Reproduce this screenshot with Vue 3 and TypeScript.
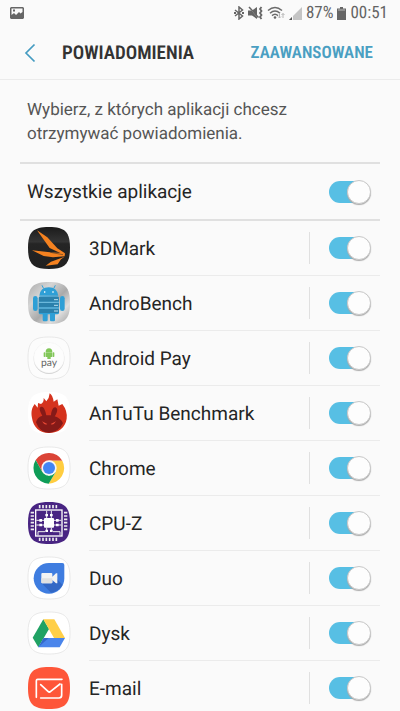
<script setup lang="ts">
import { computed, ref } from 'vue'

interface AppEntry {
  id: string
  name: string
  enabled: boolean
}

const apps = ref<AppEntry[]>([
  { id: 'mark', name: '3DMark', enabled: true },
  { id: 'androbench', name: 'AndroBench', enabled: true },
  { id: 'pay', name: 'Android Pay', enabled: true },
  { id: 'antutu', name: 'AnTuTu Benchmark', enabled: true },
  { id: 'chrome', name: 'Chrome', enabled: true },
  { id: 'cpuz', name: 'CPU-Z', enabled: true },
  { id: 'duo', name: 'Duo', enabled: true },
  { id: 'drive', name: 'Dysk', enabled: true },
  { id: 'email', name: 'E-mail', enabled: true },
])

const allEnabled = computed<boolean>({
  get: () => apps.value.every((app) => app.enabled),
  set: (value) => apps.value.forEach((app) => (app.enabled = value)),
})

const squircle = 'M39 81C39 33 54 18 102 18S165 33 165 81S150 144 102 144S39 129 39 81Z'
const pinsAcross = [74, 84, 94, 104, 114, 124]
const pinsDown = [50, 60, 70, 80, 90, 100]
</script>

<template>
  <div class="screen">
    <div class="status">
      <svg class="picture" viewBox="0 0 14 12" aria-hidden="true">
        <path fill="#666" fill-rule="evenodd" d="M1 0H13L14 1V11L13 12H1L0 11V1ZM1.500 1.500V8L4 6L6 8L9 5L10.500 6.500L12.500 5V1.500ZM3 2.500H5V4.500H3Z" />
      </svg>
      <div class="indicators">
        <svg class="bluetooth" viewBox="0 0 10 14" aria-hidden="true">
          <path d="M1 4L8.500 10L5 13V1L8.500 4L1 10" fill="none" stroke="#666" stroke-width="1.500" />
          <path d="M0 6h2v2H0zM8 6h2v2H8z" fill="#666" />
        </svg>
        <svg class="mute" viewBox="0 0 15 14" aria-hidden="true">
          <path d="M0 4.500H4L9 1V13L4 9.500H0Z" fill="#666" />
          <path d="M0 .5L11 12.500" stroke="#fafafa" stroke-width="1" />
          <path d="M1 1L10.500 11.500" stroke="#666" stroke-width="1.500" />
          <path d="M13.500 1L12 3L13.500 5L12 7L13.500 9L12 11L13.500 13" fill="none" stroke="#666" stroke-width="1.800" />
        </svg>
        <svg class="wifi" viewBox="0 0 18 14" aria-hidden="true">
          <path d="M1 4.500Q8 -1.500 15 4.500M3 7.200Q8 2.700 13 7.200M5 9.600Q8 7 11 9.600" fill="none" stroke="#6b6b6b" stroke-width="1.500" />
          <circle cx="8" cy="11.500" r="1.300" fill="#666" />
          <path d="M12.500 7.500V12M11 10.500L12.500 12L14 10.500M16 12V7.500M14.500 9L16 7.500L17.500 9" fill="none" stroke="#b5b5b5" />
        </svg>
        <svg class="signal" viewBox="0 0 13 13" aria-hidden="true">
          <path d="M0 13L13 0V13Z" fill="#c4c4c4" />
          <path d="M0 13L3 10V13Z" fill="#555" />
          <path d="M3.500 8V13" stroke="#fafafa" />
        </svg>
        <span class="percent">87%</span>
        <svg class="battery" viewBox="0 0 9 13" aria-hidden="true">
          <path d="M3 0H6V1.500H9V13H0V1.500H3Z" fill="#666" />
          <path d="M1 2.500H8V3.500H1Z" fill="#bbb" />
        </svg>
        <span>00:51</span>
      </div>
    </div>

    <header class="bar">
      <button class="back" type="button" aria-label="Wstecz">
        <svg viewBox="0 0 12 20" aria-hidden="true">
          <path d="M10.500 1.500L2 10L10.500 18.500" fill="none" stroke="#449bc1" stroke-width="1.700" />
        </svg>
      </button>
      <h1>POWIADOMIENIA</h1>
      <button class="advanced" type="button">ZAAWANSOWANE</button>
    </header>

    <main>
      <p class="intro">Wybierz, z których aplikacji chcesz otrzymywać powiadomienia.</p>

      <div class="all">
        <label for="all-apps">Wszystkie aplikacje</label>
        <input id="all-apps" v-model="allEnabled" class="switch" type="checkbox" role="switch" />
      </div>

      <ul class="apps">
        <li v-for="app in apps" :key="app.id">
          <svg class="icon" viewBox="36 15 132 132" aria-hidden="true">
            <defs>
              <linearGradient id="dark" x2="0" y2="1">
                <stop offset="0" stop-color="#1b1b1b" />
                <stop offset=".35" stop-color="#343434" />
                <stop offset=".4" stop-color="#252525" />
                <stop offset="1" stop-color="#202020" />
              </linearGradient>
              <linearGradient id="metal" x2="1" y2="1">
                <stop offset="0" stop-color="#aaa" />
                <stop offset=".3" stop-color="#d5d5d5" />
                <stop offset=".55" stop-color="#aaa" />
                <stop offset=".75" stop-color="#dedede" />
                <stop offset="1" stop-color="#a0a0a0" />
              </linearGradient>
            </defs>

            <g v-if="app.id === 'mark'">
              <path :d="squircle" fill="url(#dark)" />
              <path d="M66 28L97 49L127 82L150 97L142 99L104 81Z" fill="#f58220" />
              <path d="M51 88L105 94L150 97L149 106L114 109L86 105Z" fill="#f58220" />
              <path d="M149 107L138 115L128 130L92 134L108 122Z" fill="#f58220" />
              <path d="M106 94L144 101" stroke="#252525" stroke-width="1.500" />
            </g>

            <g v-else-if="app.id === 'androbench'">
              <path :d="squircle" fill="url(#metal)" />
              <g fill="#2e9fd6">
                <path d="M73 59Q76 34 101 34T130 59Z" />
                <path d="M86 38L81 28M116 38L121 28" stroke="#2e9fd6" stroke-width="3" />
                <rect x="71" y="61" width="61" height="54" rx="5" />
                <rect x="54" y="60" width="14" height="45" rx="7" />
                <rect x="135" y="60" width="14" height="45" rx="7" />
                <rect x="83" y="110" width="15" height="26" rx="4" />
                <rect x="105" y="110" width="15" height="26" rx="4" />
              </g>
              <path d="M72 63H131V77H72ZM72 81H131V94H72ZM72 98H131V111H72Z" fill="#2b80ab" />
              <path d="M71 79H132M71 96H132" stroke="#9fcbe0" stroke-width="2" />
              <path d="M117 71H129M117 88H129M117 105H129" stroke="#b9deef" stroke-width="3" />
              <path d="M87 46h4v4h-4zM112 46h4v4h-4z" fill="#fff" />
            </g>

            <g v-else-if="app.id === 'pay'">
              <path :d="squircle" fill="#fcfcfc" stroke="#dedede" stroke-width="2" />
              <circle cx="102" cy="83" r="46" fill="#d2d2d2" />
              <circle cx="102" cy="80" r="46" fill="#fdfdfd" stroke="#ebebeb" />
              <g fill="#82c75a">
                <path d="M92 63Q92 52 102 52T112 63ZM92 64H112V78H107V84H97V78H92Z" />
                <rect x="86" y="64" width="5" height="14" rx="2" />
                <rect x="113" y="64" width="5" height="14" rx="2" />
              </g>
              <text x="102" y="105" text-anchor="middle" class="pay-word">pay</text>
            </g>

            <g v-else-if="app.id === 'antutu'">
              <path :d="squircle" fill="#fff" />
              <path d="M51 96C47 77 51 65 59 54L68 65L69 51L78 54Q87 50 86 36L94 46Q103 37 104 22Q113 28 116 47L127 40L131 59L142 54Q158 75 155 98C151 125 130 141 102 141S55 124 51 96Z" fill="#d5331e" />
              <path d="M63 109Q66 94 82 89C74 76 71 64 78 63C86 60 91 74 94 88H108C109 71 117 60 123 65C130 68 126 81 119 91Q139 98 144 112Q131 139 103 140T63 109Z" fill="#851a18" />
              <path d="M81 106L97 114Q89 120 81 106M123 106L107 114Q115 120 123 106" fill="#e54835" />
            </g>

            <g v-else-if="app.id === 'chrome'">
              <path :d="squircle" fill="#fff" stroke="#dedede" stroke-width="2" />
              <path d="M62 57A47 47 0 0 1 142 59H102L82 93Z" fill="#db4437" />
              <path d="M142 59A47 47 0 0 1 101 128L122 93L116 63L102 59Z" fill="#ffcd40" />
              <path d="M62 57A47 47 0 0 0 101 128L122 93L102 104L82 93Z" fill="#0f9d58" />
              <circle cx="102" cy="81" r="23" fill="#f5f5f5" />
              <circle cx="102" cy="81" r="18" fill="#4285f4" />
            </g>

            <g v-else-if="app.id === 'cpuz'">
              <path :d="squircle" fill="#482482" />
              <rect x="62" y="42" width="79" height="78" fill="none" stroke="#fff" stroke-width="4" />
              <path v-for="x in pinsAcross" :key="'x' + x" :d="`M${x} 27V37M${x} 125V135`" stroke="#eee" stroke-width="5" />
              <path v-for="y in pinsDown" :key="'y' + y" :d="`M47 ${y}H57M147 ${y}H157`" stroke="#eee" stroke-width="5" />
              <rect x="87" y="66" width="30" height="29" rx="3" fill="#fff" />
              <path d="M95 44V66M109 44V66M95 95V108M109 95V108M64 73H87M64 87H87M117 73H139M117 87H139M69 118V107H90M135 118V107H114" fill="none" stroke="#eee" stroke-width="3" />
              <path d="M91 54H99V61H91ZM105 54H113V61H105ZM73 69H81V77H73ZM73 83H81V91H73ZM123 69H131V77H123ZM123 83H131V91H123ZM91 101H99V108H91ZM105 101H113V108H105Z" fill="#fff" />
            </g>

            <g v-else-if="app.id === 'duo'">
              <path :d="squircle" fill="#fff" stroke="#dedede" stroke-width="2" />
              <path d="M102 36H142Q148 36 148 42V82A46 46 0 1 1 102 36Z" fill="#3f7de0" />
              <path d="M80 97L108 125Q131 122 143 102L126 84L111 97Z" fill="#3368c5" />
              <path d="M82 66H109Q112 66 112 69V77L123 67H127V97H123L112 87V94Q112 97 109 97H82Q79 97 79 94V69Q79 66 82 66Z" fill="#f3f3f3" />
              <path d="M79 82H112V94Q112 97 109 97H82Q79 97 79 94Z" fill="#e1e1e1" />
            </g>

            <g v-else-if="app.id === 'drive'">
              <path :d="squircle" fill="#fff" stroke="#dedede" stroke-width="2" />
              <path d="M85 40L102 69L70 124L53 95Z" fill="#20a264" />
              <path d="M85 40H118L150 96H117Z" fill="#ffcf48" />
              <path d="M86 96H150L134 124H70Z" fill="#4a85eb" />
              <path d="M86 96L70 124L101 96Z" fill="#3469ca" />
            </g>

            <g v-else>
              <path :d="squircle" fill="#fe5639" />
              <path d="M64 109V59Q64 55 68 55H141M77 111H132Q140 111 140 103V70M77 71L99 91Q103 95 107 91L135 69" fill="none" stroke="#fff" stroke-width="5" stroke-linecap="round" stroke-linejoin="round" />
            </g>
          </svg>
          <div class="row">
            <label :for="app.id">{{ app.name }}</label>
            <span class="divider"></span>
            <input :id="app.id" v-model="app.enabled" class="switch" type="checkbox" role="switch" />
          </div>
        </li>
      </ul>
    </main>
  </div>
</template>

<style>
body {
  background: #fafafa;
  overflow-x: hidden;
}

::-webkit-scrollbar {
  display: none;
}
</style>

<style scoped>
.screen {
  height: 100vh;
  overflow: hidden;
  color: #252525;
  font-family: Roboto, "Liberation Sans", sans-serif;
  font-size: 19px;
  text-rendering: geometricPrecision;
}

.status {
  display: flex;
  align-items: center;
  justify-content: space-between;
  height: 26px;
  padding: 0 12px 0 10px;
  color: #646464;
  font-family: "Roboto Condensed", Roboto, sans-serif;
  font-size: 17px;
}

.indicators {
  display: flex;
  align-items: center;
  gap: 4px;
}

.picture {
  width: 14px;
  height: 12px;
}

.bluetooth {
  width: 10px;
  height: 14px;
}

.mute {
  width: 15px;
  height: 14px;
}

.wifi {
  width: 18px;
  height: 14px;
}

.signal {
  width: 13px;
  height: 13px;
}

.battery {
  width: 9px;
  height: 13px;
}

.bar {
  display: flex;
  align-items: center;
  box-sizing: border-box;
  height: 54px;
  padding: 0 27px 0 24px;
  border-bottom: 1px solid #ebebeb;
}

button {
  padding: 0;
  border: 0;
  background: none;
  font-family: inherit;
  text-rendering: inherit;
}

.back {
  width: 38px;
  height: 20px;
  text-align: left;
}

.back svg {
  display: block;
  width: 12px;
  height: 20px;
}

h1 {
  flex: 1;
  margin: 0;
  color: #333;
  font-family: "Roboto Condensed", Roboto, sans-serif;
  font-size: 19px;
  font-weight: 600;
}

.advanced {
  color: #4a9fc2;
  font-family: "Roboto Condensed", Roboto, sans-serif;
  font-size: 17px;
  font-weight: 600;
}

main {
  padding: 0 20px;
}

.intro {
  max-width: 290px;
  margin: 0;
  padding: 18px 7px 16px;
  color: #555;
  font-size: 17px;
  line-height: 24px;
}

.all {
  display: flex;
  align-items: center;
  justify-content: space-between;
  height: 55px;
  padding: 0 9px 0 7px;
  border-top: 2px solid #e0e0e0;
  border-bottom: 2px solid #e0e0e0;
}

.apps {
  margin: 0;
  padding: 0;
  list-style: none;
}

li {
  display: flex;
  align-items: center;
  height: 55px;
  padding-left: 7px;
}

.icon {
  flex: none;
  width: 44px;
  height: 44px;
  margin: 0 18px 2px 0;
}

.pay-word {
  fill: #666;
  font-family: Lato, sans-serif;
  font-size: 31px;
}

.row {
  display: flex;
  flex: 1;
  align-items: center;
  box-sizing: border-box;
  height: 55px;
  padding-right: 9px;
  border-bottom: 1px solid #ebebeb;
}

.row label {
  flex: 1;
}

.divider {
  width: 1px;
  height: 32px;
  margin-right: 19px;
  background: #e0e0e0;
}

.switch {
  display: flex;
  align-items: center;
  width: 42px;
  height: 26px;
  margin: 0;
  appearance: none;
  position: relative;
}

.switch::before {
  width: 38px;
  height: 22px;
  border-radius: 11px;
  background: #57bfe4;
  content: "";
}

.switch:not(:checked)::before {
  background: #bdbdbd;
}

.switch::after {
  position: absolute;
  top: 1px;
  left: 0;
  box-sizing: border-box;
  width: 24px;
  height: 24px;
  border: 1px solid #c8c8c8;
  border-radius: 50%;
  background: #fdfdfd;
  box-shadow: 0 1px 1px #aaa;
  content: "";
}

.switch:checked::after {
  left: 18px;
}
</style>
